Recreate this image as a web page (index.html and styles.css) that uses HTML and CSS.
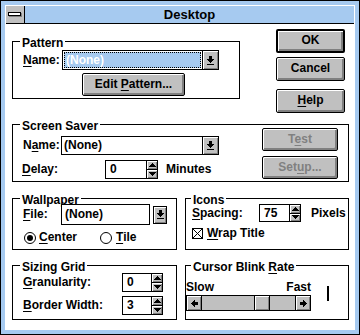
FILE: index.html
```html
<!DOCTYPE html>
<html>
<head>
<meta charset="utf-8">
<title>Desktop</title>
<link rel="stylesheet" href="styles.css">
</head>
<body>
<div class="window">
  <div class="frame">
    <div class="titlebar">
      <div class="sysmenu"><span class="sysbar"></span></div>
      <div class="title">Desktop</div>
    </div>
    <div class="client">
      <div class="row1">
        <div class="group g-pattern">
          <div class="legend">Pattern</div>
          <div class="prow">
            <span class="lbl lbl-pname"><u>N</u>ame:</span>
            <div class="combo combo-pattern">
              <div class="combo-field"><span class="sel">(None)</span></div>
              <div class="combo-btn"><svg width="7" height="9" viewBox="0 0 7 9" shape-rendering="crispEdges"><rect x="2" y="0" width="3" height="3"/><rect x="0" y="3" width="7" height="1"/><rect x="1" y="4" width="5" height="1"/><rect x="2" y="5" width="3" height="1"/><rect x="3" y="6" width="1" height="1"/><rect x="0" y="8" width="7" height="1"/></svg></div>
            </div>
          </div>
          <div class="btn btn-edit"><span>Edit <u>P</u>attern...</span></div>
        </div>
        <div class="btn-col">
          <div class="btn btn-default btn-ok"><span>OK</span></div>
          <div class="btn btn-cancel"><span>Cancel</span></div>
          <div class="btn btn-help"><span><u>H</u>elp</span></div>
        </div>
      </div>

      <div class="group g-saver">
        <div class="ss-left">
          <div class="legend">Screen Saver</div>
          <div class="ss-name">
            <span class="lbl lbl-ssname">N<u>a</u>me:</span>
            <div class="combo combo-saver">
              <div class="combo-field"><span class="ctext">(None)</span></div>
              <div class="combo-btn"><svg width="7" height="9" viewBox="0 0 7 9" shape-rendering="crispEdges"><rect x="2" y="0" width="3" height="3"/><rect x="0" y="3" width="7" height="1"/><rect x="1" y="4" width="5" height="1"/><rect x="2" y="5" width="3" height="1"/><rect x="3" y="6" width="1" height="1"/><rect x="0" y="8" width="7" height="1"/></svg></div>
            </div>
          </div>
          <div class="ss-delay">
            <span class="lbl lbl-delay"><u>D</u>elay:</span>
            <div class="spin spin-delay">
              <div class="spin-field">0</div>
              <div class="spin-btns">
                <div class="spin-up"><svg width="7" height="4" viewBox="0 0 7 4" shape-rendering="crispEdges"><rect x="3" y="0" width="1" height="1"/><rect x="2" y="1" width="3" height="1"/><rect x="1" y="2" width="5" height="1"/><rect x="0" y="3" width="7" height="1"/></svg></div>
                <div class="spin-down"><svg width="7" height="4" viewBox="0 0 7 4" shape-rendering="crispEdges"><rect x="0" y="0" width="7" height="1"/><rect x="1" y="1" width="5" height="1"/><rect x="2" y="2" width="3" height="1"/><rect x="3" y="3" width="1" height="1"/></svg></div>
              </div>
            </div>
            <span class="unit-min">Minutes</span>
          </div>
        </div>
        <div class="ss-right">
          <div class="btn btn-test disabled"><span>T<u>e</u>st</span></div>
          <div class="btn btn-setup disabled"><span>Set<u>u</u>p...</span></div>
        </div>
      </div>

      <div class="row3">
        <div class="group g-wall">
          <div class="legend">Wallpaper</div>
          <div class="wrow">
            <span class="lbl lbl-file"><u>F</u>ile:</span>
            <div class="edit wall-field">(None)</div>
            <div class="dd-btn"><svg width="7" height="9" viewBox="0 0 7 9" shape-rendering="crispEdges"><rect x="2" y="0" width="3" height="3"/><rect x="0" y="3" width="7" height="1"/><rect x="1" y="4" width="5" height="1"/><rect x="2" y="5" width="3" height="1"/><rect x="3" y="6" width="1" height="1"/><rect x="0" y="8" width="7" height="1"/></svg></div>
          </div>
          <div class="radios">
            <div class="radio radio-center">
              <svg width="12" height="12" viewBox="0 0 12 12"><circle cx="6" cy="6" r="5.5" fill="#fff" stroke="#000" stroke-width="1"/><circle cx="6" cy="6" r="3" fill="#000"/></svg>
              <span><u>C</u>enter</span>
            </div>
            <div class="radio radio-tile">
              <svg width="12" height="12" viewBox="0 0 12 12"><circle cx="6" cy="6" r="5.5" fill="#fff" stroke="#000" stroke-width="1"/></svg>
              <span><u>T</u>ile</span>
            </div>
          </div>
        </div>
        <div class="group g-icons">
          <div class="legend legend-r">Icons</div>
          <div class="irow">
            <span class="lbl lbl-spacing"><u>S</u>pacing:</span>
            <div class="spin spin-icons">
              <div class="spin-field">75</div>
              <div class="spin-btns">
                <div class="spin-up"><svg width="7" height="4" viewBox="0 0 7 4" shape-rendering="crispEdges"><rect x="3" y="0" width="1" height="1"/><rect x="2" y="1" width="3" height="1"/><rect x="1" y="2" width="5" height="1"/><rect x="0" y="3" width="7" height="1"/></svg></div>
                <div class="spin-down"><svg width="7" height="4" viewBox="0 0 7 4" shape-rendering="crispEdges"><rect x="0" y="0" width="7" height="1"/><rect x="1" y="1" width="5" height="1"/><rect x="2" y="2" width="3" height="1"/><rect x="3" y="3" width="1" height="1"/></svg></div>
              </div>
            </div>
            <span class="unit-px">Pixels</span>
          </div>
          <div class="check">
            <svg width="11" height="11" viewBox="0 0 11 11" shape-rendering="crispEdges"><rect x="0.5" y="0.5" width="10" height="10" fill="#fff" stroke="#000"/><path d="M1 1L10 10M10 1L1 10" stroke="#000" stroke-width="1" shape-rendering="auto"/></svg>
            <span><u>W</u>rap Title</span>
          </div>
        </div>
      </div>

      <div class="row4">
        <div class="group g-size">
          <div class="legend">Sizing Grid</div>
          <div class="grow grow-1">
            <span class="lbl lbl-gran"><u>G</u>ranularity:</span>
            <div class="spin spin-grid">
              <div class="spin-field">0</div>
              <div class="spin-btns">
                <div class="spin-up"><svg width="7" height="4" viewBox="0 0 7 4" shape-rendering="crispEdges"><rect x="3" y="0" width="1" height="1"/><rect x="2" y="1" width="3" height="1"/><rect x="1" y="2" width="5" height="1"/><rect x="0" y="3" width="7" height="1"/></svg></div>
                <div class="spin-down"><svg width="7" height="4" viewBox="0 0 7 4" shape-rendering="crispEdges"><rect x="0" y="0" width="7" height="1"/><rect x="1" y="1" width="5" height="1"/><rect x="2" y="2" width="3" height="1"/><rect x="3" y="3" width="1" height="1"/></svg></div>
              </div>
            </div>
          </div>
          <div class="grow grow-2">
            <span class="lbl lbl-gran"><u>B</u>order Width:</span>
            <div class="spin spin-grid">
              <div class="spin-field">3</div>
              <div class="spin-btns">
                <div class="spin-up"><svg width="7" height="4" viewBox="0 0 7 4" shape-rendering="crispEdges"><rect x="3" y="0" width="1" height="1"/><rect x="2" y="1" width="3" height="1"/><rect x="1" y="2" width="5" height="1"/><rect x="0" y="3" width="7" height="1"/></svg></div>
                <div class="spin-down"><svg width="7" height="4" viewBox="0 0 7 4" shape-rendering="crispEdges"><rect x="0" y="0" width="7" height="1"/><rect x="1" y="1" width="5" height="1"/><rect x="2" y="2" width="3" height="1"/><rect x="3" y="3" width="1" height="1"/></svg></div>
              </div>
            </div>
          </div>
        </div>
        <div class="group g-cursor">
          <div class="legend legend-r">Cursor Blink <u>R</u>ate</div>
          <div class="crow">
            <div class="ccol">
              <div class="speed"><span>Slow</span><span>Fast</span></div>
              <div class="scroll">
                <div class="sarrow sarrow-l"><svg width="7" height="7" viewBox="0 0 7 7" shape-rendering="crispEdges"><rect x="0" y="3" width="1" height="1"/><rect x="1" y="2" width="1" height="3"/><rect x="2" y="1" width="1" height="5"/><rect x="3" y="0" width="1" height="7"/><rect x="4" y="2" width="3" height="3"/></svg></div>
                <div class="strack"><div class="sthumb"></div></div>
                <div class="sarrow sarrow-r"><svg width="7" height="7" viewBox="0 0 7 7" shape-rendering="crispEdges"><rect x="6" y="3" width="1" height="1"/><rect x="5" y="2" width="1" height="3"/><rect x="4" y="1" width="1" height="5"/><rect x="3" y="0" width="1" height="7"/><rect x="0" y="2" width="3" height="3"/></svg></div>
              </div>
            </div>
            <div class="caret"></div>
          </div>
        </div>
      </div>
    </div>
  </div>
</div>
</body>
</html>
```

FILE: styles.css
```css
* { box-sizing: border-box; }
html, body { margin: 0; padding: 0; }
body {
  width: 360px; height: 335px; overflow: hidden;
  font-family: "Liberation Sans", Arial, sans-serif;
  font-weight: bold; font-size: 12px; line-height: 13px;
  color: #000; background: #fff;
}
u { text-decoration: underline; text-underline-offset: 2px; text-decoration-thickness: 1px; }
svg { display: block; fill: #000; }

.window { width: 360px; height: 335px; border: 1px solid #000; background: #a6caf0; padding: 4px; }
.frame { height: 100%; border: 1px solid #fff; background: #fff; display: flex; flex-direction: column; }
.titlebar { flex: none; height: 18px; border-bottom: 1px solid #000; background: #a6caf0; display: flex; }
.sysmenu { flex: none; width: 19px; border-right: 1px solid #000; background: #c0c0c0; padding: 6px 0 0 2px; }
.sysbar { display: block; width: 13px; height: 4px; border: 1px solid #000; background: #fff; box-shadow: 1px 1px 0 #808080; }
.title { flex: 1; text-align: center; font-size: 13px; line-height: 17px; }

.client { flex: 1; display: flex; flex-direction: column; align-items: flex-start; }

/* generic */
.group { border: 1px solid #000; flex: none; }
.legend { width: max-content; height: 13px; margin: -5px 0 0 7px; padding: 0 2px; background: #fff; white-space: nowrap; }
.legend-r { margin-left: 5px; }
.lbl { flex: none; white-space: nowrap; }

.btn {
  display: flex; align-items: center; justify-content: center;
  border: 1px solid #000; border-radius: 2px; background: #c0c0c0;
  box-shadow: inset 1px 1px 0 #fff, inset -2px -2px 0 #808080;
  white-space: nowrap; padding-bottom: 1px;
}
.btn-default { border-width: 2px; }
.disabled { color: #808080; }

.combo { display: flex; border: 1px solid #000; background: #fff; flex: none; }
.combo-field { flex: 1; padding: 1px; display: flex; }
.combo-btn {
  flex: none; width: 16px; border-left: 1px solid #000; background: #c0c0c0;
  box-shadow: inset 1px 1px 0 #fff, inset -1px -1px 0 #808080;
  display: flex; align-items: center; justify-content: center;
}
.sel { flex: 1; background: #a6caf0; color: #fff; outline: 1px dotted #000; outline-offset: -1px; padding: 0 0 0 2px; display: flex; align-items: center; }
.ctext { padding-left: 1px; display: flex; align-items: center; }

.edit { border: 1px solid #000; background: #fff; display: flex; align-items: center; padding-left: 3px; }
.dd-btn {
  flex: none; border: 1px solid #000; background: #c0c0c0;
  box-shadow: inset 1px 1px 0 #fff, inset -1px -1px 0 #808080;
  display: flex; align-items: center; justify-content: center;
}

.spin { display: flex; border: 1px solid #000; background: #fff; flex: none; }
.spin-field { flex: 1; display: flex; align-items: center; padding-left: 4px; }
.spin-btns { flex: none; width: 11px; border-left: 1px solid #000; display: flex; flex-direction: column; }
.spin-up, .spin-down {
  flex: 1; background: #c0c0c0; display: flex; align-items: center; justify-content: center;
  box-shadow: inset 1px 1px 0 #fff, inset -1px -1px 0 #808080;
}
.spin-up { border-bottom: 1px solid #000; }

/* row 1 */
.row1 { display: flex; align-items: flex-start; }
.g-pattern { margin: 17px 0 0 6px; width: 228px; height: 58px; }
.prow { display: flex; align-items: center; height: 20px; margin-left: 10px; }
.lbl-pname { width: 39px; }
.combo-pattern { width: 157px; height: 20px; }
.btn-edit { width: 103px; height: 23px; margin: 3px 0 0 69px; }
.btn-col { margin: 5px 0 0 36px; display: flex; flex-direction: column; width: 69px; }
.btn-ok, .btn-cancel, .btn-help { height: 24px; }
.btn-cancel { margin-top: 4px; }
.btn-help { margin-top: 8px; }

/* screen saver */
.g-saver { margin: 11px 0 0 6px; width: 337px; height: 58px; display: flex; align-items: flex-start; }
.ss-left { display: flex; flex-direction: column; }
.ss-name { display: flex; align-items: center; height: 19px; margin: 3px 0 0 10px; }
.lbl-ssname { width: 38px; }
.combo-saver { width: 158px; height: 19px; }
.ss-delay { display: flex; align-items: center; height: 19px; margin: 5px 0 0 9px; }
.lbl-delay { width: 83px; }
.spin-delay { width: 53px; height: 19px; }
.unit-min { margin-left: 8px; }
.ss-right { margin: 3px 10px 0 auto; display: flex; flex-direction: column; width: 76px; }
.btn-test, .btn-setup { height: 23px; }
.btn-setup { margin-top: 5px; }

/* row 3 */
.row3 { display: flex; margin: 16px 0 0 6px; }
.g-wall { width: 165px; height: 52px; }
.wrow { display: flex; align-items: center; height: 21px; margin: -3px 0 0 10px; }
.lbl-file { width: 38px; }
.wall-field { width: 89px; height: 21px; }
.dd-btn { width: 14px; height: 18px; margin-left: 3px; }
.radios { display: flex; height: 13px; margin: 6px 0 0 11px; }
.radio { display: flex; align-items: center; gap: 3px; }
.radio-center { width: 76px; }
.radio-tile { gap: 4px; }
.g-icons { width: 164px; height: 52px; margin-left: 8px; }
.irow { display: flex; align-items: center; height: 18px; margin: -3px 0 0 6px; }
.lbl-spacing { width: 67px; }
.spin-icons { width: 42px; height: 18px; }
.unit-px { margin-left: 10px; }
.check { display: flex; align-items: center; gap: 4px; height: 13px; margin: 5px 0 0 6px; }

/* row 4 */
.row4 { display: flex; margin: 15px 0 0 6px; }
.g-size { width: 165px; height: 55px; }
.grow { display: flex; align-items: center; height: 19px; margin-left: 10px; }
.grow-1 { margin-top: -1px; }
.grow-2 { margin-top: 4px; }
.lbl-gran { width: 99px; }
.spin-grid { width: 41px; height: 19px; }
.g-cursor { width: 164px; height: 55px; margin-left: 8px; }
.crow { display: flex; align-items: flex-start; margin-top: 7px; }
.ccol { width: 125px; display: flex; flex-direction: column; }
.speed { display: flex; justify-content: space-between; height: 13px; }
.scroll { display: flex; height: 16px; margin-top: 1px; border: 1px solid #000; background: #c0c0c0; }
.sarrow {
  flex: none; width: 15px; background: #c0c0c0; display: flex; align-items: center; justify-content: center;
  box-shadow: inset 1px 1px 0 #fff, inset -1px -1px 0 #808080;
}
.sarrow-l { border-right: 1px solid #000; }
.sarrow-r { border-left: 1px solid #000; }
.strack { flex: 1; display: flex; padding-left: 52px; }
.sthumb { width: 16px; border-left: 1px solid #000; border-right: 1px solid #000; background: #c0c0c0; box-shadow: inset 1px 1px 0 #fff, inset -1px -1px 0 #808080; }
.caret { width: 2px; height: 15px; background: #000; margin: 5px 0 0 16px; }
```
